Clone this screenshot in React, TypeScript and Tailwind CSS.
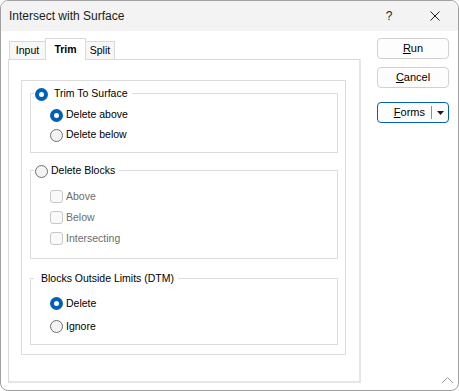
import React from 'react';

function Radio({ checked }: { checked?: boolean }) {
  return checked ? (
    <span className="flex h-[13px] w-[13px] shrink-0 items-center justify-center rounded-full bg-[#005fb8]">
      <span className="h-[5px] w-[5px] rounded-full bg-white" />
    </span>
  ) : (
    <span className="block h-[13px] w-[13px] shrink-0 rounded-full border border-[#6f6f6f] bg-[#f3f3f3]" />
  );
}

function Check() {
  return <span className="block h-[13px] w-[13px] shrink-0 rounded-[3px] border border-[#c8c8c8] bg-[#f9f9f9]" />;
}

interface GroupProps {
  title: React.ReactNode;
  className: string;
  children: React.ReactNode;
}

function GroupBox({ title, className, children }: GroupProps) {
  return (
    <div className={`relative ml-[8px] w-[308px] border border-[#dcdcdc] ${className}`}>
      <div className="absolute left-[3px] top-[-8px] flex h-[16px] items-center bg-white pr-[4px]">{title}</div>
      {children}
    </div>
  );
}

export default function App() {
  return (
    <div className="relative flex h-[391px] w-[459px] flex-col overflow-hidden rounded-[8px] border border-[#a0a0a0] bg-white font-['Liberation_Sans',Arial,sans-serif] text-[10.5px] text-black">
      {/* ── Title bar ── */}
      <header className="flex h-[30px] shrink-0 items-center bg-[#f3f3f3] text-[#1b1b1b]">
        <span className="flex-1 pl-[8px] text-[12px]">Intersect with Surface</span>
        <span className="flex w-[46px] justify-center text-[12px]">?</span>
        <span className="flex w-[46px] justify-center">
          <svg width="10" height="10" viewBox="0 0 10 10">
            <path d="M0.5 0.5l9 9M9.5 0.5l-9 9" stroke="#1b1b1b" strokeWidth="1" />
          </svg>
        </span>
      </header>

      <div className="flex flex-1 pl-[7px]">
        {/* ── Tabs + panel ── */}
        <div className="flex flex-col pt-[7px]">
          <div className="flex h-[21px] items-end pl-[1px]">
            <div className="flex h-[18px] w-[36px] items-center justify-center border-l border-t border-[#d9d9d9] bg-[#f7f7f7]">
              Input
            </div>
            <div className="relative z-10 mb-[-1px] flex h-[22px] w-[41px] items-center justify-center border-x border-t border-[#d9d9d9] bg-white font-bold">
              Trim
            </div>
            <div className="flex h-[18px] w-[29px] items-center justify-center border-r border-t border-[#d9d9d9] bg-[#f7f7f7]">
              Split
            </div>
          </div>

          <div className="h-[324px] w-[353px] border-b-2 border-l border-r-2 border-t border-[#d9d9d9] border-b-[#e6e6e6] border-r-[#e6e6e6]">
            <div className="ml-[12px] mt-[20px] h-[275px] w-[325px] border border-[#dcdcdc]">
              <GroupBox
                className="mt-[12px] h-[60px]"
                title={
                  <>
                    <span className="ml-[1px] flex">
                      <Radio checked />
                    </span>
                    <span className="ml-[6px]">Trim To Surface</span>
                  </>
                }
              >
                <div className="flex flex-col pl-[19px] pt-[11px]">
                  <div className="flex h-[20px] items-center gap-[3px]">
                    <Radio checked />
                    <span>Delete above</span>
                  </div>
                  <div className="flex h-[20px] items-center gap-[3px]">
                    <Radio />
                    <span>Delete below</span>
                  </div>
                </div>
              </GroupBox>

              <GroupBox
                className="mt-[17px] h-[89px]"
                title={
                  <>
                    <span className="ml-[1px] flex">
                      <Radio />
                    </span>
                    <span className="ml-[3px]">Delete Blocks</span>
                  </>
                }
              >
                <div className="flex flex-col pl-[19px] pt-[15px] text-[#6d6d6d]">
                  <div className="flex h-[21px] items-center gap-[3px]">
                    <Check />
                    <span>Above</span>
                  </div>
                  <div className="flex h-[21px] items-center gap-[3px]">
                    <Check />
                    <span>Below</span>
                  </div>
                  <div className="flex h-[21px] items-center gap-[3px]">
                    <Check />
                    <span>Intersecting</span>
                  </div>
                </div>
              </GroupBox>

              <GroupBox className="mt-[19px] h-[67px]" title={<span className="ml-[7px]">Blocks Outside Limits (DTM)</span>}>
                <div className="flex flex-col pl-[19px] pt-[13px]">
                  <div className="flex h-[23px] items-center gap-[3px]">
                    <Radio checked />
                    <span>Delete</span>
                  </div>
                  <div className="flex h-[23px] items-center gap-[3px]">
                    <Radio />
                    <span>Ignore</span>
                  </div>
                </div>
              </GroupBox>
            </div>
          </div>
        </div>

        {/* ── Buttons ── */}
        <div className="ml-[16px] flex flex-col pt-[7px] text-[11px]">
          <button className="flex h-[21px] w-[72px] items-center justify-center rounded-[4px] border border-[#d1d1d1] bg-[#fdfdfd]">
            <span className="underline underline-offset-[1px]">R</span>un
          </button>
          <button className="mt-[8px] flex h-[21px] w-[72px] items-center justify-center rounded-[4px] border border-[#d1d1d1] bg-[#fdfdfd]">
            <span className="underline underline-offset-[1px]">C</span>ancel
          </button>
          <button className="mt-[14px] flex h-[21px] w-[72px] items-center rounded-[4px] border border-[#005fb8] bg-[#fdfdfd]">
            <span className="flex flex-1 justify-end pr-[6px]">
              <span className="underline underline-offset-[1px]">F</span>orms
            </span>
            <span className="h-[13px] w-px bg-[#8f8f8f]" />
            <span className="flex w-[16px] justify-center">
              <svg width="7" height="4" viewBox="0 0 7 4">
                <path d="M0 0h7L3.5 4z" fill="#1b1b1b" />
              </svg>
            </span>
          </button>
        </div>
      </div>

      {/* resize grip */}
      <svg className="absolute left-[440px] top-[375px]" width="13" height="8" viewBox="0 0 13 8">
        <polyline points="1,7 6.5,1.5 12,7" fill="none" stroke="#9a9a9a" strokeWidth="1" />
      </svg>
    </div>
  );
}
